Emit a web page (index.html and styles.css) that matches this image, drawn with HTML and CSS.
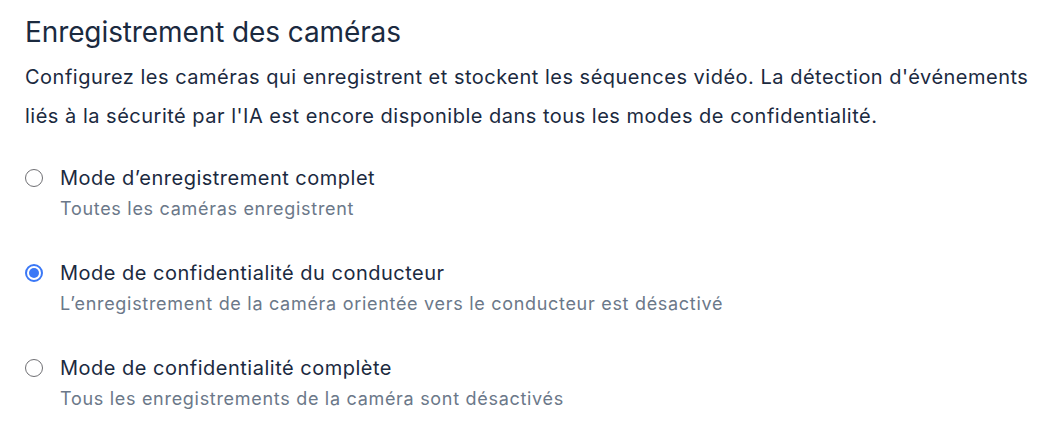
FILE: index.html
```html
<!DOCTYPE html>
<html lang="fr">
<head>
<meta charset="utf-8">
<link rel="stylesheet" href="styles.css">
</head>
<body>
<section class="panel">
  <h2 class="title">Enregistrement des caméras</h2>
  <p class="intro">Configurez les caméras qui enregistrent et stockent les séquences vidéo. La détection d'événements liés à la sécurité par l'IA est encore disponible dans tous les modes de confidentialité.</p>
  <div class="options">
    <label class="option">
      <span class="radio"></span>
      <span class="text">
        <span class="label">Mode d’enregistrement complet</span>
        <span class="desc">Toutes les caméras enregistrent</span>
      </span>
    </label>
    <label class="option">
      <span class="radio checked"></span>
      <span class="text">
        <span class="label">Mode de confidentialité du conducteur</span>
        <span class="desc">L’enregistrement de la caméra orientée vers le conducteur est désactivé</span>
      </span>
    </label>
    <label class="option">
      <span class="radio"></span>
      <span class="text">
        <span class="label">Mode de confidentialité complète</span>
        <span class="desc">Tous les enregistrements de la caméra sont désactivés</span>
      </span>
    </label>
  </div>
</section>
</body>
</html>
```
FILE: styles.css
```css
html, body {
  margin: 0;
  padding: 0;
  background: #ffffff;
  overflow: hidden;
}
body {
  font-family: Inter, "Noto Sans", sans-serif;
  color: #1b2a3f;
}
.panel {
  padding: 14px 0 0 25px;
}
.title {
  margin: 0;
  font-size: 28px;
  font-weight: 400;
  letter-spacing: -0.1px;
  line-height: 36px;
  color: #1b2a3f;
}
.intro {
  margin: 8px 0 0 0;
  font-size: 20px;
  letter-spacing: 0.5px;
  line-height: 39px;
  color: #1b2a3f;
}
.options {
  margin-top: 27px;
  display: flex;
  flex-direction: column;
  gap: 33px;
}
.option {
  display: flex;
  align-items: flex-start;
  gap: 17px;
}
.radio {
  box-sizing: border-box;
  width: 18px;
  height: 18px;
  margin-top: 6px;
  border: 1.5px solid #6f6f73;
  border-radius: 50%;
  flex: none;
  display: flex;
  align-items: center;
  justify-content: center;
}
.radio.checked {
  border: 2px solid #3b78f6;
}
.radio.checked::after {
  content: "";
  width: 10px;
  height: 10px;
  border-radius: 50%;
  background: #3b78f6;
}
.text {
  display: flex;
  flex-direction: column;
}
.label {
  font-size: 20px;
  letter-spacing: 0.5px;
  line-height: 30px;
  color: #1b2a3f;
}
.desc {
  font-size: 18px;
  letter-spacing: 0.7px;
  line-height: 32px;
  color: #6b7889;
}
```
